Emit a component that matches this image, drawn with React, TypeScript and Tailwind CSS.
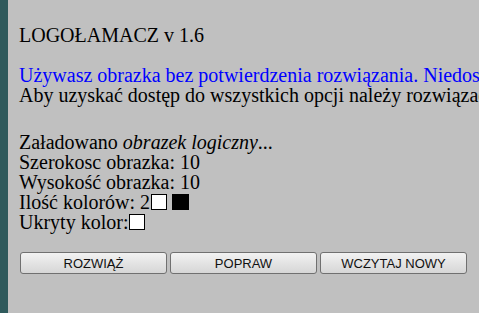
import React from "react";

export default function App() {
  const serif = { fontFamily: '"Liberation Serif", "Times New Roman", serif' };
  return (
    <div className="flex h-[313px] w-[479px] overflow-hidden bg-[#c0c0c0]">
      <div className="w-[8px] shrink-0 bg-[#2f5a5c]" />
      <div
        className="min-w-0 flex-1 overflow-hidden whitespace-nowrap pl-[11px] pt-[25px] text-[20px] leading-[20px] text-black"
        style={serif}
      >
        <div>LOGOŁAMACZ v 1.6</div>
        <div className="mt-[20px] text-[#0000ff]">
          Używasz obrazka bez potwierdzenia rozwiązania. Niedostępne są niektóre opcje.
        </div>
        <div>Aby uzyskać dostęp do wszystkich opcji należy rozwiązać obrazek.</div>
        <div className="mt-[27px]">
          Załadowano <i>obrazek logiczny</i>...
        </div>
        <div>Szerokosc obrazka: 10</div>
        <div>Wysokość obrazka: 10</div>
        <div className="flex items-center">
          <span>Ilość kolorów: 2</span>
          <span className="ml-[1px] inline-block h-[16px] w-[16px] border border-black bg-white" />
          <span className="ml-[5px] inline-block h-[16px] w-[17px] border border-black bg-black" />
        </div>
        <div className="flex items-center">
          <span>Ukryty kolor:</span>
          <span className="ml-[1px] inline-block h-[16px] w-[16px] border border-black bg-white" />
        </div>
        <div
          className="mt-[20px] flex gap-[3px] pl-[1px]"
          style={{ fontFamily: '"Liberation Sans", Arial, sans-serif' }}
        >
          {["ROZWIĄŻ", "POPRAW", "WCZYTAJ NOWY"].map((t) => (
            <button
              key={t}
              className="flex h-[22px] w-[147px] items-center justify-center rounded-[3px] border border-[#707070] bg-gradient-to-b from-[#f2f2f2] to-[#d6d6d6] text-[13px] leading-none text-[#111]"
            >
              {t}
            </button>
          ))}
        </div>
      </div>
    </div>
  );
}
